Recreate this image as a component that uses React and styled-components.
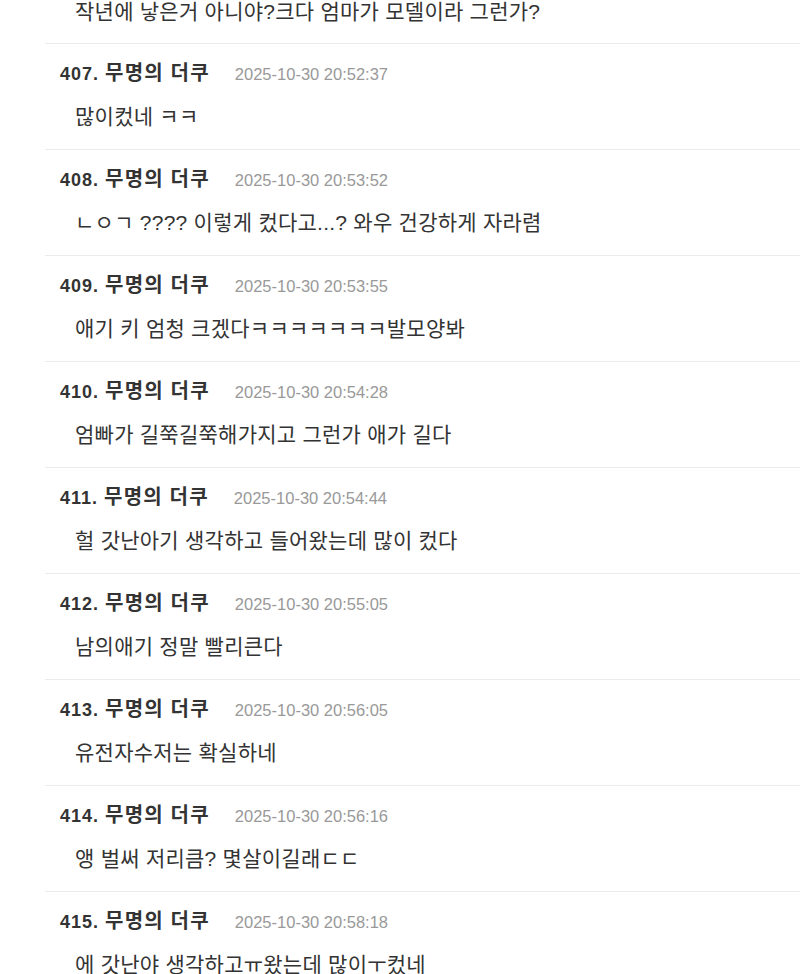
import React from 'react'
import styled, { createGlobalStyle } from 'styled-components'

const GlobalStyle = createGlobalStyle`
  html, body {
    margin: 0;
    padding: 0;
    background: #fff;
    overflow: hidden;
  }
  body {
    font-family: "Liberation Sans", "Noto Sans CJK KR", sans-serif;
    color: #333;
  }
`

const CommentList = styled.ul`
  list-style: none;
  margin: 0 0 0 45px;
  padding: 0;
`

// the first comment is scrolled past: only its last line shows
const Comment = styled.li`
  padding: ${props => (props.$cut ? '0 0 19px 15px' : '14px 0 17px 15px')};
  border-top: ${props => (props.$cut ? 'none' : '1px solid #ebebeb')};
`

const Header = styled.div`
  display: flex;
  align-items: baseline;
  height: 30px;
  line-height: 30px;
  margin-bottom: 14px;
`

const Author = styled.span`
  font-size: 18px;
  font-weight: bold;
  color: #333;
  letter-spacing: 1px;
`

const Nick = styled.span`
  font-size: 20px;
  letter-spacing: 1.2px;
`

const Time = styled.span`
  margin-left: 25px;
  font-size: 16.5px;
  color: #999;
`

const Body = styled.p`
  margin: 0;
  padding-left: 15px;
  height: ${props => (props.$cut ? '24px' : '30px')};
  line-height: ${props => (props.$cut ? '24px' : '30px')};
  font-size: 21px;
  letter-spacing: 0.25px;
  color: #333;
  white-space: nowrap;
`

const comments = [
  { no: 406, time: '2025-10-30 20:52:01', text: '작년에 낳은거 아니야?크다 엄마가 모델이라 그런가?' },
  { no: 407, time: '2025-10-30 20:52:37', text: '많이컸네 ㅋㅋ' },
  { no: 408, time: '2025-10-30 20:53:52', text: 'ㄴㅇㄱ ???? 이렇게 컸다고...? 와우 건강하게 자라렴' },
  { no: 409, time: '2025-10-30 20:53:55', text: '애기 키 엄청 크겠다ㅋㅋㅋㅋㅋㅋㅋ발모양봐' },
  { no: 410, time: '2025-10-30 20:54:28', text: '엄빠가 길쭉길쭉해가지고 그런가 애가 길다' },
  { no: 411, time: '2025-10-30 20:54:44', text: '헐 갓난아기 생각하고 들어왔는데 많이 컸다' },
  { no: 412, time: '2025-10-30 20:55:05', text: '남의애기 정말 빨리큰다' },
  { no: 413, time: '2025-10-30 20:56:05', text: '유전자수저는 확실하네' },
  { no: 414, time: '2025-10-30 20:56:16', text: '앵 벌써 저리큼? 몇살이길래ㄷㄷ' },
  { no: 415, time: '2025-10-30 20:58:18', text: '에 갓난야 생각하고ㅠ왔는데 많이ㅜ컸네' },
]

export default function App () {
  return (
    <>
      <GlobalStyle />
      <CommentList>
        {comments.map((c, i) => (
          <Comment key={c.no} $cut={i === 0}>
            {i > 0 && (
              <Header>
                <Author>{c.no}. <Nick>무명의 더쿠</Nick></Author>
                <Time>{c.time}</Time>
              </Header>
            )}
            <Body $cut={i === 0}>{c.text}</Body>
          </Comment>
        ))}
      </CommentList>
    </>
  )
}
